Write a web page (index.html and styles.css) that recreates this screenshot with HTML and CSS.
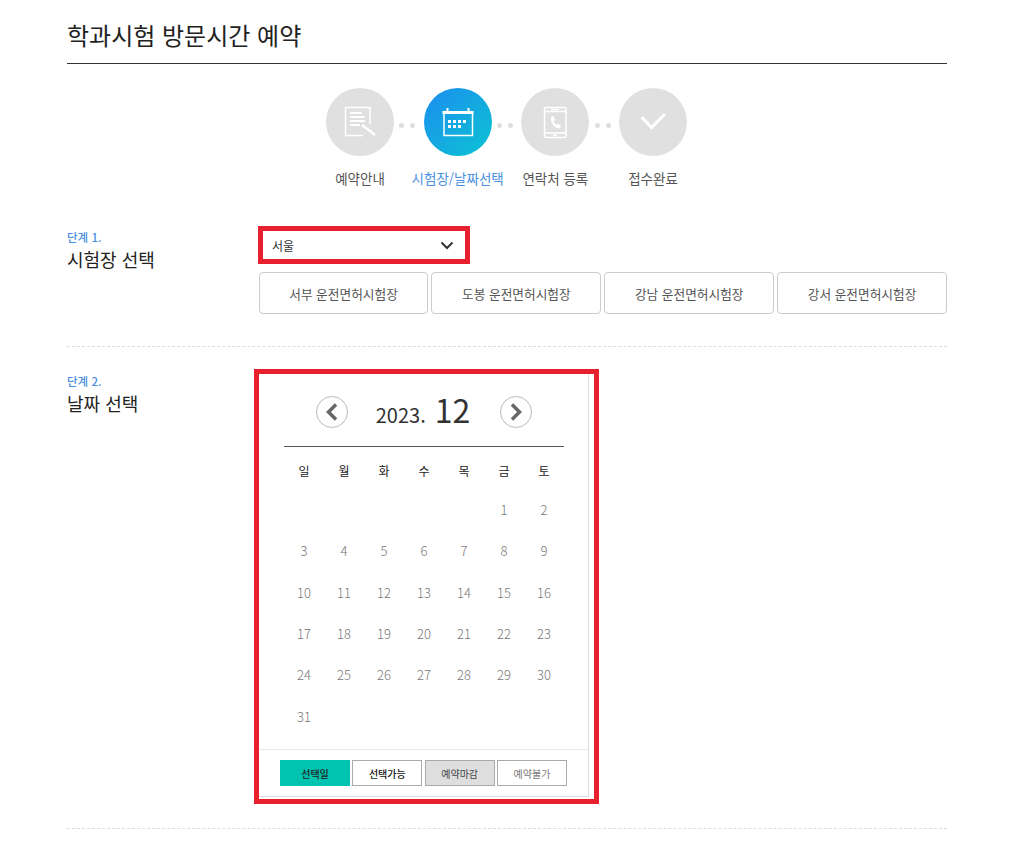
FILE: index.html
```html
<!DOCTYPE html>
<html lang="ko">

<head>
    <meta charset="UTF-8">
    <meta name="viewport" content="width=device-width, initial-scale=1.0">
    <title>학과시험 방문시간 예약</title>
    <link rel="stylesheet" href="styles.css">
</head>

<body>
    <div class="container">
        <h1>학과시험 방문시간 예약</h1>

        <ul class="steps">
            <li class="step">
                <span class="circle">
                    <svg width="50" height="50" viewBox="0 0 50 50" fill="none" stroke="#fff" stroke-width="1.500">
                        <path d="M35 27V10.500H10.500V38.500H28"/>
                        <path d="M15 16h12M15 20h15M15 24h15M15 28h10" stroke-width="1.800"/>
                        <path d="M27 28l13 10" stroke-width="2.500"/>
                    </svg>
                </span>
                <span class="step-label">예약안내</span>
            </li>
            <li class="dots"><i></i><i></i></li>
            <li class="step on">
                <span class="circle">
                    <svg width="50" height="50" viewBox="0 0 50 50" fill="none" stroke="#fff" stroke-width="1.500">
                        <rect x="11" y="15" width="28.500" height="23.500"/>
                        <path d="M9.500 15.500h31" stroke-width="3"/>
                        <path d="M14.500 11v4M35.500 11v4" stroke-width="2"/>
                        <path d="M15 23h3v3h-3zM20 23h3v3h-3zM25 23h3v3h-3zM30 23h3v3h-3zM15 28h3v3h-3zM20 28h3v3h-3zM25 28h3v3h-3z" fill="#fff" stroke="none"/>
                    </svg>
                </span>
                <span class="step-label">시험장/날짜선택</span>
            </li>
            <li class="dots"><i></i><i></i></li>
            <li class="step">
                <span class="circle">
                    <svg width="50" height="50" viewBox="0 0 50 50" fill="none" stroke="#fff" stroke-width="1.500">
                        <rect x="14.500" y="10.500" width="21.500" height="30" rx="1.500"/>
                        <path d="M14.500 14.500h21.500M14.500 36h21.500M21 12.500h8M23 38.300h4"/>
                        <path d="M20.500 19.500l3-.5 1.500 4-1.500 1.500c.7 1.500 1.500 2.500 3 3.200l1.500-1.200 3 2.500-1.500 2.500c-5 0-10-6-8-12z" fill="#fff" stroke="none"/>
                    </svg>
                </span>
                <span class="step-label">연락처 등록</span>
            </li>
            <li class="dots"><i></i><i></i></li>
            <li class="step">
                <span class="circle">
                    <svg width="50" height="50" viewBox="0 0 50 50" fill="none" stroke="#fff" stroke-width="3">
                        <path d="M13.500 20l10 10.500L37 17"/>
                    </svg>
                </span>
                <span class="step-label">접수완료</span>
            </li>
        </ul>

        <div class="section section-first">
            <div class="section-title">
                <p class="step-no">단계 1.</p>
                <h2>시험장 선택</h2>
            </div>
            <div class="section-body">
                <div class="select-box">
                    <span>서울</span>
                    <svg width="14" height="9" viewBox="0 0 14 9" fill="none" stroke="#333" stroke-width="2">
                        <path d="M1.500 1.500L7 7l5.500-5.500"/>
                    </svg>
                </div>
                <div class="site-list">
                    <button>서부 운전면허시험장</button>
                    <button>도봉 운전면허시험장</button>
                    <button>강남 운전면허시험장</button>
                    <button>강서 운전면허시험장</button>
                </div>
            </div>
        </div>

        <div class="section section-second">
            <div class="section-title">
                <p class="step-no">단계 2.</p>
                <h2>날짜 선택</h2>
            </div>
            <div class="calendar-box">
                <div class="calendar">
                    <div class="cal-head">
                        <span class="arrow">
                            <svg width="16" height="18" viewBox="0 0 16 18" fill="none" stroke="#666" stroke-width="3.500">
                                <path d="M12 1.500L4.500 9l7.500 7.500"/>
                            </svg>
                        </span>
                        <span class="cal-title"><span class="year">2023.</span><span class="month">12</span></span>
                        <span class="arrow">
                            <svg width="16" height="18" viewBox="0 0 16 18" fill="none" stroke="#666" stroke-width="3.500">
                                <path d="M4 1.500L11.500 9 4 16.500"/>
                            </svg>
                        </span>
                    </div>
                    <table>
                        <thead>
                            <tr><th>일</th><th>월</th><th>화</th><th>수</th><th>목</th><th>금</th><th>토</th></tr>
                        </thead>
                        <tbody>
                            <tr><td></td><td></td><td></td><td></td><td></td><td>1</td><td>2</td></tr>
                            <tr><td>3</td><td>4</td><td>5</td><td>6</td><td>7</td><td>8</td><td>9</td></tr>
                            <tr><td>10</td><td>11</td><td>12</td><td>13</td><td>14</td><td>15</td><td>16</td></tr>
                            <tr><td>17</td><td>18</td><td>19</td><td>20</td><td>21</td><td>22</td><td>23</td></tr>
                            <tr><td>24</td><td>25</td><td>26</td><td>27</td><td>28</td><td>29</td><td>30</td></tr>
                            <tr><td>31</td><td></td><td></td><td></td><td></td><td></td><td></td></tr>
                        </tbody>
                    </table>
                    <div class="legend">
                        <span class="selected">선택일</span>
                        <span class="able">선택가능</span>
                        <span class="closed">예약마감</span>
                        <span class="disabled">예약불가</span>
                    </div>
                </div>
            </div>
        </div>
    </div>
</body>

</html>
```

FILE: styles.css
```css
* {
    box-sizing: border-box;
}

body {
    font-family: "Noto Sans CJK KR", "Noto Sans", sans-serif;
    background-color: #fff;
    color: #333;
    margin: 0;
    padding: 0;
}

.container {
    width: 880px;
    margin-left: 67px;
}

h1 {
    font-size: 24px;
    font-weight: 400;
    line-height: 36px;
    color: #222;
    margin: 0;
    padding: 17px 0 10px;
    border-bottom: 1px solid #333;
}

.steps {
    list-style: none;
    display: flex;
    justify-content: center;
    align-items: flex-start;
    margin: 24px 0 0;
    padding: 0 1px 0 0;
    height: 102px;
}

.step {
    width: 68px;
    display: flex;
    flex-direction: column;
    align-items: center;
}

.circle {
    width: 68px;
    height: 68px;
    flex: none;
    border-radius: 50%;
    background-color: #e0e0e0;
    display: flex;
    align-items: center;
    justify-content: center;
}

.step.on .circle {
    background: linear-gradient(135deg, #1b8df0, #0cc4d2);
}

.step-label {
    margin-top: 12px;
    font-size: 13.500px;
    line-height: 20px;
    color: #555;
    white-space: nowrap;
}

.step.on .step-label {
    color: #4a90e2;
}

.dots {
    width: 29.670px;
    height: 68px;
    padding: 7px 3px 0 0;
    display: flex;
    align-items: center;
    justify-content: center;
    gap: 6px;
}

.dots i {
    width: 5px;
    height: 5px;
    border-radius: 50%;
    background-color: #dedede;
}

.section {
    display: flex;
    border-bottom: 1px dashed #ddd;
}

.section-first {
    margin-top: 36px;
    padding-bottom: 32px;
}

.section-second {
    margin-top: 22px;
    padding-bottom: 24px;
}

.section-title {
    width: 192px;
    flex: none;
}

.section-first .section-title {
    padding-top: 4px;
}

.section-second .section-title {
    padding-top: 5px;
}

.step-no {
    margin: 0;
    font-size: 11.500px;
    font-weight: 500;
    line-height: 14px;
    color: #4a90e2;
}

h2 {
    margin: 1px 0 0;
    font-size: 18px;
    font-weight: 400;
    line-height: 28px;
    color: #222;
}

.section-body {
    flex: 1;
}

.select-box {
    width: 212px;
    height: 38px;
    margin-left: -1px;
    border: 5px solid #e8202e;
    padding: 0 11px 0 9px;
    display: flex;
    align-items: center;
    justify-content: space-between;
    font-size: 12px;
    color: #333;
}

.site-list {
    display: flex;
    gap: 3px;
    margin: 8px 0 0 -0.400px;
}

.site-list button {
    flex: 1;
    height: 42px;
    padding: 0;
    background-color: #fff;
    border: 1px solid #ccc;
    border-radius: 4px;
    font-family: inherit;
    font-size: 12.700px;
    color: #555;
}

.calendar-box {
    width: 345px;
    height: 435px;
    margin-left: -5px;
    border: 5px solid #e8202e;
}

.calendar {
    width: 330px;
    height: 423px;
    border-right: 1px solid #ddd;
    border-bottom: 1px solid #ddd;
    display: flex;
    flex-direction: column;
}

.cal-head {
    height: 73px;
    width: 280px;
    margin: 0 25px;
    border-bottom: 1px solid #555;
    padding-top: 3px;
    display: flex;
    align-items: center;
    justify-content: center;
}

.arrow {
    width: 32px;
    height: 32px;
    border: 1px solid #bbb;
    border-radius: 50%;
    display: flex;
    align-items: center;
    justify-content: center;
    flex: none;
}

.cal-title {
    width: 152px;
    padding: 0 2px 6px 0;
    display: flex;
    align-items: baseline;
    justify-content: center;
    gap: 9px;
}

.year {
    font-size: 20px;
    color: #333;
}

.month {
    font-size: 32px;
    color: #333;
}

table {
    width: 280px;
    margin: 0 25px;
    border-collapse: collapse;
    table-layout: fixed;
}

th {
    height: 42px;
    padding: 4px 0 0;
    font-size: 12px;
    font-weight: 400;
    color: #222;
}

td {
    height: 41.300px;
    padding: 0;
    text-align: center;
    font-size: 13px;
    font-weight: 300;
    color: #777;
}

.legend {
    margin-top: auto;
    height: 47px;
    border-top: 1px solid #e8e8e8;
    display: flex;
    justify-content: center;
    gap: 2.330px;
    padding-top: 10px;
}

.legend span {
    width: 70px;
    height: 26px;
    border: 1px solid #aaa;
    display: flex;
    align-items: center;
    justify-content: center;
    font-size: 10px;
    color: #222;
}

.legend .selected {
    background-color: #00c4b0;
    border-color: #00c4b0;
    font-weight: 500;
}

.legend .able {
    font-weight: 500;
    color: #111;
}

.legend .closed {
    background-color: #dedede;
    color: #444;
}

.legend .disabled {
    color: #777;
}
```
